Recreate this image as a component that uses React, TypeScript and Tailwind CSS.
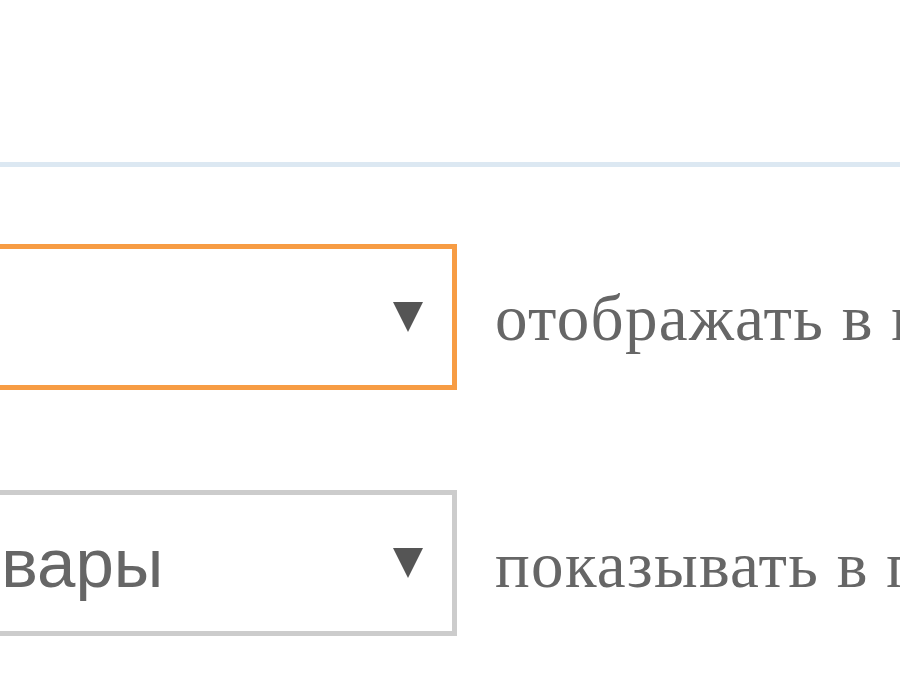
import React from "react";

function Arrow() {
  return (
    <svg width="30" height="30" viewBox="0 0 30 30" className="shrink-0">
      <polygon points="0,0 30,0 15,30" fill="#555555" />
    </svg>
  );
}

export default function App() {
  return (
    <div className="w-[900px] h-[700px] bg-white overflow-hidden flex flex-col pt-[162px]">
      <div className="h-[5px] w-full bg-[#dce8f2]" />

      <div className="mt-[77px] flex items-center">
        <div className="-ml-[143px] w-[600px] h-[146px] shrink-0 border-[5px] border-[#f79c44] flex items-center justify-end pr-[29px]">
          <Arrow />
        </div>
        <div
          className="ml-[38px] whitespace-nowrap leading-none text-[65px] tracking-[1.3px] text-[#666666] mt-[3px]"
          style={{ fontFamily: '"Liberation Serif", "Times New Roman", serif' }}
        >
          отображать в поиске
        </div>
      </div>

      <div className="mt-[100px] flex items-center">
        <div className="-ml-[143px] w-[600px] h-[146px] shrink-0 border-[5px] border-[#cccccc] flex items-center pl-[70px] pr-[29px]">
          <div
            className="flex-1 whitespace-nowrap leading-none text-[69px] text-[#666666]"
            style={{ fontFamily: '"Liberation Sans", Arial, sans-serif' }}
          >
            товары
          </div>
          <Arrow />
        </div>
        <div
          className="ml-[38px] whitespace-nowrap leading-none text-[65px] tracking-[1.3px] text-[#666666] mt-[4px]"
          style={{ fontFamily: '"Liberation Serif", "Times New Roman", serif' }}
        >
          показывать в поиске
        </div>
      </div>
    </div>
  );
}
